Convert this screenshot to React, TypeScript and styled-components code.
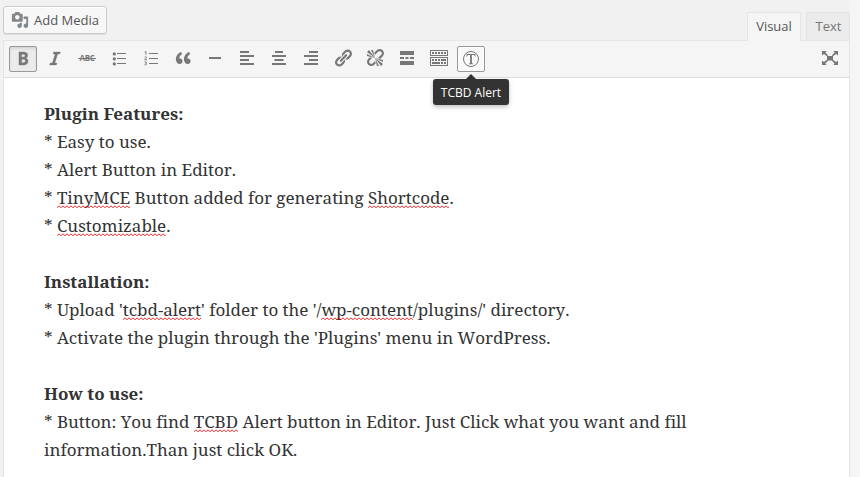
import React from 'react';
import styled, { createGlobalStyle, css } from 'styled-components';

const Global = createGlobalStyle`
  * { box-sizing: border-box; }
  html, body { margin: 0; padding: 0; }
  body { background: #f1f1f1; overflow: hidden; font-family: "Open Sans", sans-serif; font-size: 13px; }
`;

const Page = styled.div`
  width: 860px;
  height: 477px;
  padding: 6px 10px 0 3px;
  display: flex;
  flex-direction: column;
  overflow: hidden;
  background: linear-gradient(to right, #f1f1f1 850px, #f5f5f5 850px);
`;

const Tools = styled.div`
  height: 34px;
  flex: none;
  display: flex;
  justify-content: space-between;
  align-items: flex-start;
`;

const MediaButton = styled.button`
  width: 104px;
  height: 28px;
  padding: 0 0 1px 7px;
  display: flex;
  align-items: center;
  gap: 5px;
  border: 1px solid #ccc;
  border-radius: 3px;
  background: #f7f7f7;
  box-shadow: inset 0 1px 0 #fff, 0 1px 0 rgba(0, 0, 0, 0.08);
  color: #555;
  font: 13px/26px "Open Sans", sans-serif;
  white-space: nowrap;
`;

const Tabs = styled.div`
  display: flex;
  gap: 5px;
  padding-top: 6px;
`;

const Tab = styled.button<{ $active?: boolean }>`
  width: ${p => (p.$active ? 54 : 44)}px;
  height: ${p => (p.$active ? 29 : 28)}px;
  padding: ${p => (p.$active ? '0 0 1px' : '0 0 0 1px')};
  position: relative;
  z-index: 1;
  border: 1px solid #e5e5e5;
  border-bottom: 0;
  background: ${p => (p.$active ? '#f5f5f5' : '#ebebeb')};
  color: ${p => (p.$active ? '#555' : '#777')};
  font: 13px/27px "Open Sans", sans-serif;
  text-align: center;
`;

const Editor = styled.div`
  flex: 1;
  border: 1px solid #e5e5e5;
  border-bottom: 0;
  background: #fff;
`;

const Toolbar = styled.div`
  height: 37px;
  padding: 5px;
  display: flex;
  gap: 4px;
  border-bottom: 1px solid #dedede;
  background: #f5f5f5;
`;

const Tool = styled.button<{ $state?: 'pressed' | 'hover'; $end?: boolean }>`
  width: 28px;
  height: 26px;
  flex: none;
  padding: 0;
  display: flex;
  align-items: center;
  justify-content: center;
  position: relative;
  border: 1px solid transparent;
  border-radius: 2px;
  background: transparent;
  color: #777;
  ${p => p.$end && css`margin-left: auto;`}
  ${p => p.$state === 'pressed' && css`
    background: #ebebeb;
    border-color: #999;
    box-shadow: inset 0 2px 5px -3px rgba(0, 0, 0, 0.3);
  `}
  ${p => p.$state === 'hover' && css`
    background: #fafafa;
    border-color: #999;
    box-shadow: inset 0 1px 0 #fff;
  `}
`;

const Icon = styled.svg`
  width: 20px;
  height: 20px;
  flex: none;
  display: block;
  fill: currentColor;
`;

const Strike = styled.span`
  position: relative;
  margin-top: -2px;
  font: 700 8px/10px "Open Sans", sans-serif;
  letter-spacing: -0.3px;
  &::after {
    content: "";
    position: absolute;
    left: -1px;
    right: -1px;
    top: 5px;
    height: 1px;
    background: currentColor;
  }
`;

const Tooltip = styled.div`
  position: absolute;
  top: 32px;
  left: 50%;
  width: 76px;
  height: 26px;
  transform: translateX(-50%);
  border-radius: 3px;
  background: #333;
  box-shadow: 0 2px 4px rgba(0, 0, 0, 0.25);
  color: #fff;
  font: 12px/27px "Open Sans", sans-serif;
  text-align: center;
  white-space: nowrap;
  &::before {
    content: "";
    position: absolute;
    top: -5px;
    left: 33px;
    border: 5px solid transparent;
    border-top: 0;
    border-bottom-color: #333;
  }
`;

const Content = styled.div`
  padding: 22px 40px 0;
  color: #333;
  font-family: "Noto Serif", "Droid Serif", "DejaVu Serif", serif;
  font-size: 17px;
  line-height: 28px;
`;

const Line = styled.div<{ $bold?: boolean; $spacing?: number }>`
  height: 28px;
  white-space: pre;
  font-weight: ${p => (p.$bold ? 700 : 400)};
  font-kerning: ${p => (p.$bold ? 'normal' : 'none')};
  letter-spacing: ${p => (p.$spacing ? `${p.$spacing}px` : 'normal')};
`;

const Misspelt = styled.span`
  position: relative;
  &::after {
    content: "";
    position: absolute;
    left: 0;
    right: 0;
    bottom: 0;
    height: 4px;
    background: url("data:image/svg+xml,%3Csvg xmlns='http://www.w3.org/2000/svg' width='4' height='4'%3E%3Cpath d='M-2 .8L0 2.800L2 .8L4 2.800L6 .8' fill='none' stroke='%23f00000' stroke-width='.85'/%3E%3C/svg%3E") repeat-x 0 0 / 4px 4px;
  }
`;

const Svg = ({ children }: { children: React.ReactNode }) => <Icon viewBox="0 0 20 20">{children}</Icon>;

const icons: Record<string, React.ReactNode> = {
  bold: <path d="M6 4v13h4.54c1.37 0 2.46-.33 3.26-1 .8-.66 1.2-1.58 1.2-2.77 0-.84-.17-1.51-.51-2.01s-.9-.85-1.67-1.03v-.09c.57-.1 1.02-.4 1.36-.9s.51-1.13.51-1.91c0-1.14-.39-1.98-1.17-2.5C12.75 4.26 11.5 4 9.78 4H6zm2.57 5.15V6.26h1.36c.73 0 1.27.11 1.61.32.34.22.51.58.51 1.07 0 .54-.16.92-.47 1.15s-.82.35-1.51.35h-1.5zm0 2.19h1.6c1.44 0 2.16.53 2.16 1.61 0 .6-.17 1.05-.51 1.34s-.86.43-1.57.43H8.57v-3.38z" stroke="currentColor" strokeWidth=".4" transform="translate(0 -1)" />,
  italic: <path d="M14.78 6h-2.13l-2.8 9h2.12l-.62 2H4.6l.62-2h2.14l2.8-9H8.03l.62-2h6.75z" stroke="currentColor" strokeWidth=".3" transform="translate(0 -1)" />,
  bullets: <><circle cx="5.3" cy="4.9" r="1.6" /><circle cx="5.3" cy="9.9" r="1.6" /><circle cx="5.3" cy="14.9" r="1.6" /><path d="M8 4h9v1H8zM8 9h9v1H8zM8 14h9v1H8z" /></>,
  numbers: <><path d="M8 4h9v1H8zM8 9h9v1H8zM8 14h9v1H8z" /><path fill="none" stroke="currentColor" strokeWidth=".9" d="M3.6 3.2l1.3-.8v3.5M3.6 8.2c.8-.8 2-.5 2 .3 0 .6-1 1.300-2 2.200h2.300M3.600 13h1.900l-1 1.200c1.800 0 1.400 2.200-1 1.500" /></>,
  quote: <path d="M9.49 13.22c0-.74-.2-1.38-.61-1.9-.62-.78-1.83-.88-2.53-.72-.29-1.65 1.11-3.75 2.92-4.65L7.88 4c-2.73 1.3-5.42 4.28-4.96 8.05C3.21 14.43 4.59 16 6.54 16c.85 0 1.56-.25 2.12-.75s.83-1.18.83-2.03zm8.05 0c0-.74-.2-1.38-.61-1.9-.63-.78-1.83-.88-2.53-.72-.29-1.65 1.11-3.75 2.92-4.65L15.93 4c-2.73 1.3-5.41 4.28-4.95 8.05.29 2.38 1.66 3.95 3.61 3.95.85 0 1.56-.25 2.12-.75s.83-1.18.83-2.03z" transform="translate(0 -1)" />,
  rule: <path d="M4 8h12v2H4z" />,
  left: <path d="M3 2h9v2H3zM3 6h14v2H3zM3 10h9v2H3zM3 14h14v2H3z" />,
  center: <path d="M6 2h8v2H6zM3 6h14v2H3zM5.500 10h9v2h-9zM3 14h14v2H3z" />,
  right: <path d="M8 2h9v2H8zM3 6h14v2H3zM8 10h9v2H8zM3 14h14v2H3z" />,
  link: <path d="M17.74 2.76c1.68 1.69 1.68 4.41 0 6.1l-1.53 1.52c-1.12 1.12-2.7 1.47-4.14 1.09l2.62-2.61.76-.77.76-.76c.84-.84.84-2.2 0-3.04-.84-.85-2.2-.85-3.04 0l-.77.76-3.38 3.38c-.37-1.44-.02-3.02 1.1-4.14l1.52-1.53c1.69-1.68 4.42-1.68 6.1 0zM8.59 13.43l5.34-5.34c.42-.42.42-1.1 0-1.52-.44-.43-1.13-.39-1.53 0l-5.33 5.34c-.42.42-.42 1.1 0 1.52.44.43 1.13.39 1.52 0zm-.76 2.29l4.14-4.15c.38 1.44.03 3.02-1.09 4.14l-1.52 1.53c-1.69 1.68-4.41 1.68-6.1 0-1.68-1.68-1.68-4.42 0-6.1l1.53-1.52c1.12-1.12 2.7-1.47 4.14-1.1l-4.14 4.15c-.85.84-.85 2.2 0 3.05.84.84 2.2.84 3.04 0z" transform="translate(0 -1)" />,
  unlink: <path d="M17.74 2.26c1.68 1.69 1.68 4.41 0 6.1l-1.53 1.52c-.32.33-.69.58-1.08.77L13 10l1.69-1.64.76-.77.76-.76c.84-.84.84-2.2 0-3.04-.84-.85-2.2-.85-3.04 0l-.77.76-.76.76L10 7l-.65-2.14c.19-.38.44-.75.77-1.07l1.52-1.53c1.69-1.68 4.42-1.68 6.1 0zM2 4l8 6-6-8zm4-2l4 8-2-8H6zM2 6l8 4-8-2V6zm7.36 7.69L10 13l.74 2.35-1.38 1.39c-1.69 1.68-4.41 1.68-6.1 0-1.68-1.68-1.68-4.42 0-6.1l1.39-1.38L7 10l-.69.64-1.52 1.53c-.85.84-.85 2.2 0 3.04.84.85 2.2.85 3.04 0zM18 16l-8-6 6 8zm-4 2l-4-8 2 8h2zm4-4l-8-4 8 2v2z" transform="translate(0 -1)" />,
  more: <path d="M3 2h14v4H3zM3 8h4v2H3zM8.500 8h3v2h-3zM13 8h4v2h-4zM3 12h14v4H3z" />,
  kitchen: <path fillRule="evenodd" d="M1 1h18v6H1zM2 2v4h16V2zM1 8h18v9H1zM2 9v7h16V9zM3 3h2v2H3zM6 3h2v2H6zM9 3h2v2H9zM12 3h2v2h-2zM15 3h2v2h-2zM3 10h2v2H3zM6 10h2v2H6zM9 10h2v2H9zM12 10h5v2h-5zM3 13h8v2H3zM12 13h2v2h-2zM15 13h2v2h-2z" />,
  expand: <path d="M7 7h6v4.400H7zM2 2h4.800L5.300 3.500 8.100 6.300 7.100 7.300 3.900 4.900 2 6.500zM18 2v4.500l-1.900-1.600-3.200 2.400-1-1 2.800-2.800L13.200 2zM2 16v-4.500l1.900 1.600 3.200-2.400 1 1-2.800 2.800L6.800 16zM18 16h-4.800l1.500-1.500-2.800-2.800 1-1 3.200 2.400 1.900-1.600z" />,
  alert: <><circle cx="10" cy="10" r="7.500" fill="none" stroke="currentColor" /><path d="M5.700 5h8.600l.3 2.700h-.6c-.3-1.400-.8-1.800-2-1.800h-1.100v7.700c0 .8.300 1 1.400 1.100v.5H7.700v-.5c1.100-.1 1.400-.3 1.400-1.100V5.900H8c-1.200 0-1.700.4-2 1.800h-.6z" /></>,
  media: <path d="M13 11V4c0-.55-.45-1-1-1h-1.67L9 1H5L3.67 3H2c-.55 0-1 .45-1 1v7c0 .55.45 1 1 1h10c.55 0 1-.45 1-1zM7 4.500c1.380 0 2.500 1.120 2.500 2.500S8.380 9.500 7 9.500 4.500 8.380 4.500 7 5.620 4.500 7 4.500zM14 6h5v10.500c0 1.380-1.120 2.500-2.500 2.500S14 17.880 14 16.500s1.120-2.500 2.500-2.500c.17 0 .34.020.5.050V9h-3V6zm-4 8.050V13h2v3.500c0 1.380-1.120 2.500-2.500 2.500S7 17.880 7 16.500 8.120 14 9.500 14c.17 0 .34.020.5.050z" />,
};

const MediaIcon = styled(Icon)`
  width: 18px;
  height: 18px;
  color: #82878c;
`;

export default function App() {
  return (
    <>
      <Global />
      <Page>
        <Tools>
          <MediaButton><MediaIcon viewBox="0 0 20 20">{icons.media}</MediaIcon>Add Media</MediaButton>
          <Tabs>
            <Tab $active>Visual</Tab>
            <Tab>Text</Tab>
          </Tabs>
        </Tools>
        <Editor>
          <Toolbar>
            <Tool $state="pressed"><Svg>{icons.bold}</Svg></Tool>
            <Tool><Svg>{icons.italic}</Svg></Tool>
            <Tool><Strike>ABC</Strike></Tool>
            {['bullets', 'numbers', 'quote', 'rule', 'left', 'center', 'right', 'link', 'unlink', 'more', 'kitchen'].map(name => (
              <Tool key={name}><Svg>{icons[name]}</Svg></Tool>
            ))}
            <Tool $state="hover">
              <Svg>{icons.alert}</Svg>
              <Tooltip>TCBD Alert</Tooltip>
            </Tool>
            <Tool $end><Svg>{icons.expand}</Svg></Tool>
          </Toolbar>
          <Content>
            <Line $bold>Plugin Features:</Line>
            <Line>* Easy to use.</Line>
            <Line>* Alert Button in Editor.</Line>
            <Line $spacing={-0.015}>* <Misspelt>TinyMCE</Misspelt> Button added for generating <Misspelt>Shortcode</Misspelt>.</Line>
            <Line>* <Misspelt>Customizable</Misspelt>.</Line>
            <Line />
            <Line $bold>Installation:</Line>
            <Line $spacing={-0.01}>* Upload '<Misspelt>tcbd-alert</Misspelt>' folder to the '/<Misspelt>wp-content</Misspelt>/plugins/' directory.</Line>
            <Line $spacing={-0.01}>* Activate the plugin through the 'Plugins' menu in WordPress.</Line>
            <Line />
            <Line $bold>How to use:</Line>
            <Line $spacing={-0.015}>* Button: You find <Misspelt>TCBD</Misspelt> Alert button in Editor. Just Click what you want and fill</Line>
            <Line>information.Than just click OK.</Line>
          </Content>
        </Editor>
      </Page>
    </>
  );
}
